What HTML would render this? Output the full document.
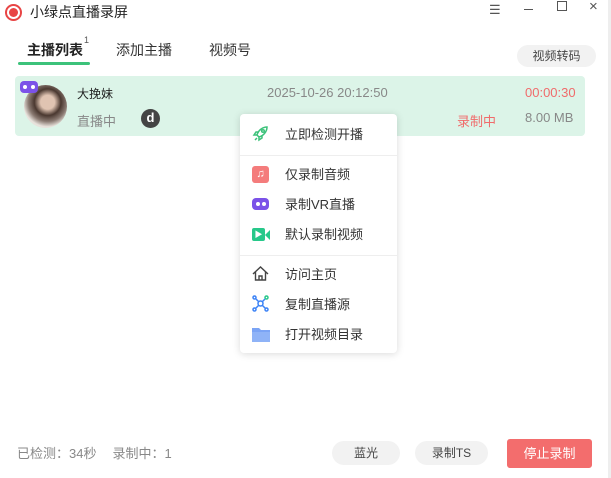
<!DOCTYPE html>
<html><head><meta charset="utf-8"><style>
*{margin:0;padding:0;box-sizing:border-box}
body{width:611px;height:478px;background:#fff;font-family:"Liberation Sans","Noto Sans CJK SC",sans-serif;position:relative;overflow:hidden;color:#222}
.a{position:absolute;white-space:nowrap}
.mi{position:absolute;left:45px;font-size:13px;color:#333}
.ic{position:absolute;left:12px;width:17px;height:17px}
</style></head><body>
<div class="a" style="left:5px;top:4px;width:17px;height:17px;border-radius:50%;border:2px solid #e84545"></div>
<div class="a" style="left:9px;top:8px;width:9px;height:9px;border-radius:50%;background:#e84545"></div>
<div class="a" style="left:30px;top:3px;font-size:14px;line-height:18px">小绿点直播录屏</div>
<div class="a" style="left:489px;top:2px;font-size:13px;color:#555">☰</div>
<div class="a" style="left:524px;top:9px;width:9px;height:1px;background:#555"></div>
<div class="a" style="left:557px;top:1px;width:10px;height:10px;border:1px solid #555"></div>
<div class="a" style="left:589px;top:-2px;font-size:15px;color:#555">×</div>
<div class="a" style="right:0;top:0;width:3px;height:478px;background:#eeeeee"></div>

<div class="a" style="left:27px;top:40px;font-size:14px;font-weight:bold">主播列表</div>
<div class="a" style="left:84px;top:35px;font-size:9px;color:#555">1</div>
<div class="a" style="left:18px;top:62px;width:72px;height:3px;background:#3cc27a;border-radius:2px"></div>
<div class="a" style="left:116px;top:40px;font-size:14px;color:#333">添加主播</div>
<div class="a" style="left:209px;top:40px;font-size:14px;color:#333">视频号</div>
<div class="a" style="left:517px;top:45px;width:79px;height:22px;border-radius:11px;background:#f2f2f2;font-size:12px;color:#444;text-align:center;line-height:22px">视频转码</div>

<div class="a" style="left:15px;top:76px;width:570px;height:60px;background:#dcf4e8;border-radius:4px"></div>
<div class="a" style="left:24px;top:85px;width:43px;height:43px;border-radius:50%;background:radial-gradient(circle at 55% 40%,#e0c4b2 0 20%,#4a3830 38%,#8a7a72 55%,#e8e2dc 70%)"></div>
<div class="a" style="left:20px;top:81px;width:18px;height:12px;border-radius:4px;background:#7b52e8"></div>
<div class="a" style="left:23px;top:85px;width:4px;height:4px;border-radius:50%;background:#fff"></div>
<div class="a" style="left:31px;top:85px;width:4px;height:4px;border-radius:50%;background:#fff"></div>
<div class="a" style="left:77px;top:85px;font-size:12px">大挽妹</div>
<div class="a" style="left:77px;top:111px;font-size:13px;color:#888">直播中</div>
<div class="a" style="left:141px;top:109px;width:19px;height:19px;border-radius:50%;background:#444;color:#fff;font-weight:bold;font-size:13px;text-align:center;line-height:18px">d</div>
<div class="a" style="left:267px;top:85px;font-size:13px;color:#888">2025-10-26 20:12:50</div>
<div class="a" style="left:525px;top:85px;font-size:13px;color:#f06b6b">00:00:30</div>
<div class="a" style="left:457px;top:111px;font-size:13px;color:#f06b6b">录制中</div>
<div class="a" style="left:525px;top:110px;font-size:13px;color:#888">8.00 MB</div>

<div class="a" style="left:240px;top:114px;width:157px;height:239px;background:#fff;border-radius:4px;box-shadow:0 1px 8px rgba(0,0,0,.15)">
 <svg class="ic" style="top:11px" viewBox="0 0 17 17" fill="none" stroke="#3cc27a" stroke-width="1.5"><path d="M15 2C10 2 6 6 5 10l2 2c4-1 8-5 8-10zM5 10l-3 0 2-3 3 0M7 12l0 3 3-2 0-3M3 15l2-2"/><circle cx="11" cy="6" r="1.3"/></svg>
 <div class="mi" style="top:10px">立即检测开播</div>
 <div class="a" style="left:0;top:41px;width:157px;height:1px;background:#eee"></div>
 <div class="ic" style="top:52px;background:#f47c7c;border-radius:3px;color:#fff;font-size:11px;text-align:center;line-height:17px">♫</div>
 <div class="mi" style="top:50px">仅录制音频</div>
 <div class="ic" style="top:84px;height:12px;background:#7b52e8;border-radius:4px"></div>
 <div class="a" style="left:16px;top:88px;width:4px;height:4px;border-radius:50%;background:#fff"></div>
 <div class="a" style="left:22px;top:88px;width:4px;height:4px;border-radius:50%;background:#fff"></div>
 <div class="mi" style="top:80px">录制VR直播</div>
 <div class="ic" style="top:114px;width:13px;height:13px;background:#27c88a;border-radius:2px;color:#fff;font-size:8px;text-align:center;line-height:13px">▶</div>
 <div class="a" style="left:25px;top:116px;width:0;height:0;border-top:5px solid transparent;border-bottom:5px solid transparent;border-right:5px solid #27c88a"></div>
 <div class="mi" style="top:110px">默认录制视频</div>
 <div class="a" style="left:0;top:141px;width:157px;height:1px;background:#eee"></div>
 <svg class="ic" style="top:151px" viewBox="0 0 17 17" fill="none" stroke="#444" stroke-width="1.4"><path d="M1 9L8.5 2 16 9M3.5 7v8h10V7M7 15v-4h3v4"/></svg>
 <div class="mi" style="top:150px">访问主页</div>
 <svg class="ic" style="top:181px" viewBox="0 0 17 17" fill="none" stroke="#3b82f6" stroke-width="1.5"><circle cx="8.5" cy="8.5" r="2.5"/><circle cx="2.5" cy="2.5" r="1.5"/><circle cx="14.5" cy="2.5" r="1.5" stroke="#27c88a"/><circle cx="2.5" cy="14.5" r="1.5"/><circle cx="14.5" cy="14.5" r="1.5"/><path d="M4 4l3 3M13 4l-3 3M4 13l3-3M13 13l-3-3"/></svg>
 <div class="mi" style="top:180px">复制直播源</div>
 <svg class="ic" style="top:212px;width:18px" viewBox="0 0 18 17"><path d="M0 2h7l2 2h9v12H0z" fill="#7ba4f5"/><rect x="0" y="6" width="18" height="10" fill="#8fb3f7"/></svg>
 <div class="mi" style="top:210px">打开视频目录</div>
</div>

<div class="a" style="left:17px;top:443px;font-size:13px;color:#888">已检测：34秒<span style="display:inline-block;width:16px"></span>录制中：1</div>
<div class="a" style="left:332px;top:441px;width:68px;height:24px;border-radius:12px;background:#f2f2f2;font-size:12px;color:#444;text-align:center;line-height:24px">蓝光</div>
<div class="a" style="left:415px;top:441px;width:73px;height:24px;border-radius:12px;background:#f2f2f2;font-size:12px;color:#444;text-align:center;line-height:24px">录制TS</div>
<div class="a" style="left:507px;top:439px;width:85px;height:29px;border-radius:3px;background:#f36d6d;font-size:13px;color:#fff;text-align:center;line-height:29px">停止录制</div>
</body></html>
